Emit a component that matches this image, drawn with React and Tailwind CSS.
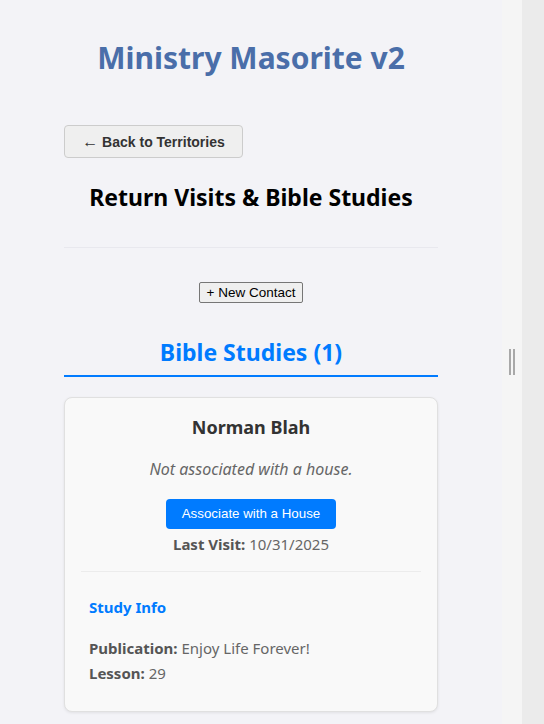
export default function App() {
  return (
    <div className="flex h-[724px] w-[544px] overflow-hidden bg-[#f3f3f7] font-['Noto_Sans',sans-serif]">
      {/* Main column */}
      <div className="w-[502px] shrink-0 overflow-hidden">
        <div className="mx-auto w-[374px]">
          <h1 className="mt-[36px] text-center text-[30px] font-bold leading-[44px] text-[#4a6ea9]">
            Ministry Masorite v2
          </h1>

          <button className="mt-[45px] h-[33px] w-[179px] rounded-[4px] border border-[#cccccc] bg-[#efefef] font-['Liberation_Sans',sans-serif] text-[14px] font-bold text-[#333]">
            <span className="text-[16px]">←</span> Back to Territories
          </button>

          <h2 className="mt-[24px] text-center text-[23px] font-bold leading-[30px] text-black">
            Return Visits &amp; Bible Studies
          </h2>

          <div className="mt-[35px] h-px bg-[#e8e8ee]" />

          <div className="mt-[34px] flex justify-center">
            <button className="h-[21px] rounded-[2px] border border-[#767676] bg-[#efefef] px-[7px] font-['Liberation_Sans',sans-serif] text-[13.5px] leading-[15px] text-black">
              + New Contact
            </button>
          </div>

          <h3 className="mt-[34px] border-b-2 border-[#007bff] pb-[8px] text-center text-[23px] font-bold leading-[30px] text-[#007bff]">
            Bible Studies (1)
          </h3>

          {/* Study card */}
          <div className="mt-[20px] h-[315px] rounded-[8px] border border-[#e0e0e0] bg-[#f9f9f9] px-[16px] pt-[16px] shadow-[0_1px_3px_rgba(0,0,0,0.08)]">
            <div className="text-center">
              <div className="text-[18px] font-bold leading-[26px] text-[#333]">Norman Blah</div>
              <div className="mt-[17px] text-[16px] italic leading-[24px] text-[#666]">
                Not associated with a house.
              </div>
              <button className="mt-[18px] h-[30px] w-[170px] rounded-[4px] bg-[#007bff] font-['Liberation_Sans',sans-serif] text-[13.33px] text-white">
                Associate with a House
              </button>
              <div className="mt-[4px] text-[15px] leading-[22px] text-[#666]">
                <span className="font-bold text-[#555]">Last Visit:</span> 10/31/2025
              </div>
            </div>

            <div className="mt-[16px] h-px bg-[#ececec]" />

            <div className="px-[8px]">
              <div className="mt-[24px] text-[15px] font-bold leading-[22px] text-[#007bff]">Study Info</div>
              <div className="mt-[18px] text-[15px] leading-[25px] text-[#666]">
                <span className="font-bold text-[#555]">Publication:</span> Enjoy Life Forever!
              </div>
              <div className="text-[15px] leading-[25px] text-[#666]">
                <span className="font-bold text-[#555]">Lesson:</span> 29
              </div>
            </div>
          </div>
        </div>
      </div>

      {/* Resize handle */}
      <div className="flex w-[20px] shrink-0 items-center justify-center gap-[2px] bg-[#f5f5f5]">
        <div className="h-[26px] w-[2px] bg-[#a8a8a8]" />
        <div className="h-[26px] w-[2px] bg-[#a8a8a8]" />
      </div>

      {/* Right edge */}
      <div className="flex-1 bg-[#ebebeb]" />
    </div>
  );
}
